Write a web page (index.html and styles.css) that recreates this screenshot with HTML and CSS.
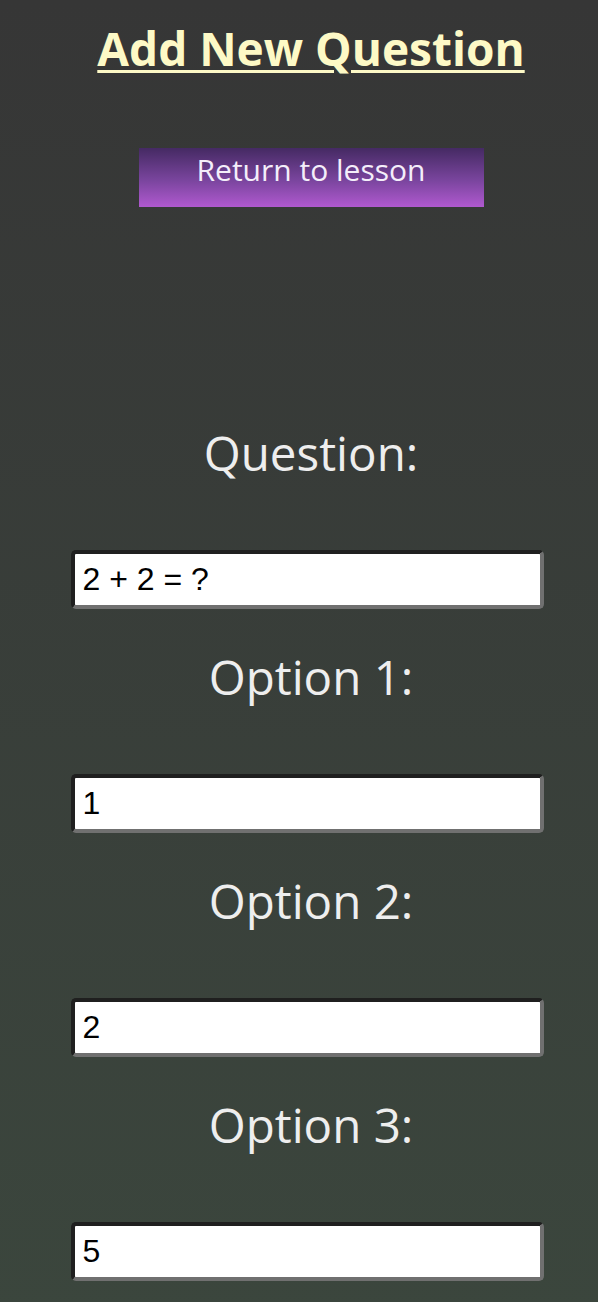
FILE: index.html
```html
<!DOCTYPE html>
<html lang="en">
<head>
<meta charset="utf-8">
<title>Add New Question</title>
<link rel="stylesheet" href="styles.css">
</head>
<body>
<main class="page">
  <h1 class="title">Add New Question</h1>
  <button class="return-btn" type="button">Return to lesson</button>
  <form class="question-form">
    <div class="field">
      <label class="field-label" for="q">Question:</label>
      <input class="field-input" id="q" type="text" value="2 + 2 = ?">
    </div>
    <div class="field">
      <label class="field-label" for="o1">Option 1:</label>
      <input class="field-input" id="o1" type="text" value="1">
    </div>
    <div class="field">
      <label class="field-label" for="o2">Option 2:</label>
      <input class="field-input" id="o2" type="text" value="2">
    </div>
    <div class="field">
      <label class="field-label" for="o3">Option 3:</label>
      <input class="field-input" id="o3" type="text" value="5">
    </div>
  </form>
</main>
</body>
</html>
```

FILE: styles.css
```css
html, body {
  margin: 0;
  padding: 0;
}
body {
  min-height: 100vh;
  background: linear-gradient(to bottom, #363636 0%, #3b463d 100%);
  font-family: "Open Sans", "Noto Sans", sans-serif;
  overflow: hidden;
}
.page {
  display: flex;
  flex-direction: column;
  align-items: center;
  padding-left: 24px;
  padding-right: 0;
}
.title {
  margin: 20px 0 0 0;
  font-size: 46px;
  line-height: 56px;
  font-weight: 700;
  color: #fdf9c6;
  text-decoration: underline;
  text-decoration-thickness: 3px;
  text-underline-offset: 4px;
}
.return-btn {
  margin-top: 72px;
  width: 345px;
  height: 59px;
  padding: 0 0 16px 0;
  border: none;
  background: linear-gradient(to bottom, #452a63 0%, #7a459e 55%, #b059cf 100%);
  color: #f4eefa;
  font-family: "Open Sans", "Noto Sans", sans-serif;
  font-size: 30px;
  line-height: 1;
}
.question-form {
  margin-top: 212px;
  display: flex;
  flex-direction: column;
  align-items: center;
  width: 100%;
}
.field {
  display: flex;
  flex-direction: column;
  align-items: center;
  width: 100%;
  margin-bottom: 34px;
}
.field-label {
  font-size: 47.5px;
  line-height: 60px;
  color: #eeeeee;
  padding-top: 4px;
  margin-bottom: 67px;
}
.field-input {
  box-sizing: border-box;
  width: 473px;
  height: 59px;
  margin: 0 8px 0 0;
  padding: 0 8px;
  border-style: solid;
  border-width: 4px;
  border-color: #1f1f1f #707070 #707070 #1f1f1f;
  border-radius: 5px;
  background: #ffffff;
  color: #000000;
  font-family: "Liberation Sans", Arial, sans-serif;
  font-size: 32px;
}
```
